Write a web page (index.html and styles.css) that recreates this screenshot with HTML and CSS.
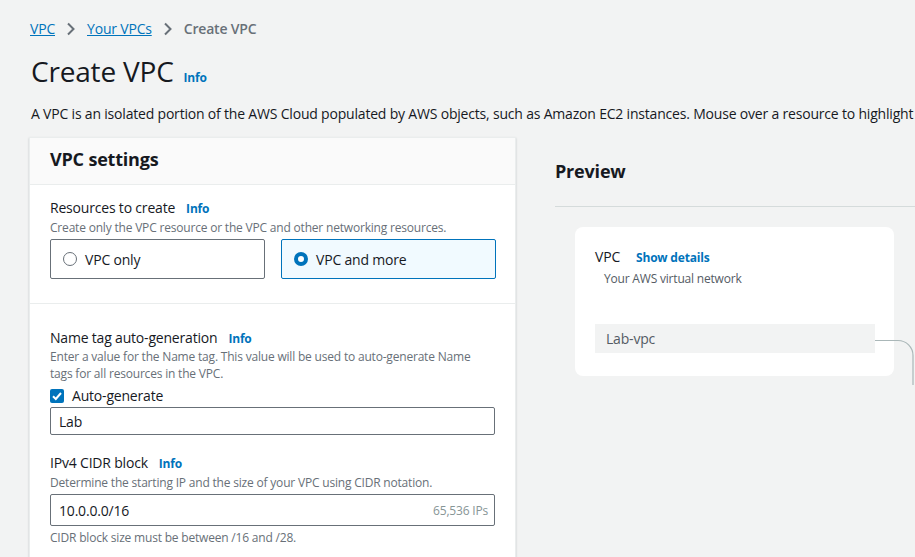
FILE: index.html
```html
<!DOCTYPE html>
<html lang="en">
<head>
<meta charset="utf-8">
<title>Create VPC</title>
<link rel="stylesheet" href="styles.css">
</head>
<body>
<div class="page">
  <nav class="crumbs">
    <a class="crumb-link" href="#">VPC</a>
    <svg class="chev" width="10" height="14" viewBox="0 0 10 14"><path d="M2 1.5 L7.5 7 L2 12.5" fill="none" stroke="#687078" stroke-width="2"/></svg>
    <a class="crumb-link" href="#">Your VPCs</a>
    <svg class="chev" width="10" height="14" viewBox="0 0 10 14"><path d="M2 1.5 L7.5 7 L2 12.5" fill="none" stroke="#687078" stroke-width="2"/></svg>
    <span class="crumb-current">Create VPC</span>
  </nav>
  <div class="title-row">
    <h1>Create VPC</h1>
    <a class="info" href="#">Info</a>
  </div>
  <p class="intro">A VPC is an isolated portion of the AWS Cloud populated by AWS objects, such as Amazon EC2 instances. Mouse over a resource to highlight</p>

  <div class="columns">
    <section class="panel">
      <header class="panel-head"><h2>VPC settings</h2></header>
      <div class="panel-section first">
        <div class="label-row"><span class="label">Resources to create</span><a class="info" href="#">Info</a></div>
        <div class="desc">Create only the VPC resource or the VPC and other networking resources.</div>
        <div class="tiles">
          <label class="tile"><span class="radio"></span><span>VPC only</span></label>
          <label class="tile selected"><span class="radio on"></span><span>VPC and more</span></label>
        </div>
      </div>
      <div class="panel-section second">
        <div class="label-row"><span class="label">Name tag auto-generation</span><a class="info" href="#">Info</a></div>
        <div class="desc wrap">Enter a value for the Name tag. This value will be used to auto-generate Name tags for all resources in the VPC.</div>
        <label class="check-row"><span class="checkbox"><svg width="14" height="14" viewBox="0 0 14 14"><path d="M3 7.2 L5.8 10 L11 4" fill="none" stroke="#fff" stroke-width="2"/></svg></span><span>Auto-generate</span></label>
        <div class="input small">Lab</div>

        <div class="label-row gap"><span class="label">IPv4 CIDR block</span><a class="info" href="#">Info</a></div>
        <div class="desc">Determine the starting IP and the size of your VPC using CIDR notation.</div>
        <div class="input big"><span>10.0.0.0/16</span><span class="ips">65,536 IPs</span></div>
        <div class="hint">CIDR block size must be between /16 and /28.</div>
      </div>
    </section>

    <section class="preview">
      <h2 class="preview-title">Preview</h2>
      <div class="rule"></div>
      <div class="card">
        <div class="card-head"><span class="card-name">VPC</span><a class="info" href="#">Show details</a></div>
        <div class="card-sub">Your AWS virtual network</div>
        <div class="node">Lab-vpc</div>
        <svg class="connector" width="40" height="60" viewBox="0 0 40 60"><path d="M0 15.5 H23 A15 15 0 0 1 38 30.5 V60" fill="none" stroke="#aab7b8" stroke-width="1.2"/></svg>
      </div>
    </section>
  </div>
</div>
</body>
</html>
```
FILE: styles.css
```css
* { box-sizing: border-box; }
html, body { margin: 0; padding: 0; }
body {
  background: #f2f3f3;
  font-family: "Open Sans", "Noto Sans", sans-serif;
  letter-spacing: -0.012em;
  color: #16191f;
  width: 915px;
  height: 557px;
  overflow: hidden;
}
.page { padding: 19px 0 0 29px; }
.crumbs {
  display: flex;
  align-items: center;
  gap: 11px;
  margin-left: 1px;
  font-size: 14px;
  line-height: 20px;
}
.crumb-link { color: #0073bb; text-decoration: underline; }
.chev { display: block; }
.crumb-current { color: #687078; font-weight: 600; }
.title-row {
  display: flex;
  align-items: baseline;
  gap: 10px;
  margin: 14px 0 0 2px;
}
h1 { margin: 0; font-size: 28px; line-height: 36px; font-weight: 400; }
.info { color: #0073bb; font-size: 12px; font-weight: 700; text-decoration: none; }
.intro {
  margin: 15px 0 0 2px;
  font-size: 14px;
  line-height: 20px;
  white-space: nowrap;
}
.columns { display: flex; margin-top: 13px; align-items: flex-start; }
.panel {
  width: 487px;
  flex: none;
  background: #fff;
  border: 1px solid #eaeded;
  border-bottom: none;
  box-shadow: 0 1px 2px rgba(0, 28, 36, 0.2);
  height: 440px;
}
.panel-head {
  background: #fafafa;
  border-bottom: 1px solid #eaeded;
  padding: 9px 20px 12px;
}
.panel-head h2 { margin: 0; font-size: 18px; line-height: 25px; font-weight: 700; }
.panel-section { padding: 0 20px; }
.panel-section.first { padding-top: 13px; padding-bottom: 24px; border-bottom: 1px solid #eaeded; }
.panel-section.second { padding-top: 24px; }
.label-row { display: flex; align-items: baseline; gap: 11px; font-size: 14px; line-height: 20px; }
.label-row.gap { margin-top: 18px; }
.desc { font-size: 12px; line-height: 17px; color: #687078; white-space: nowrap; }
.second .desc.wrap { white-space: normal; margin-top: -1px; }
.tiles { display: grid; grid-template-columns: 215px 215px; gap: 16px; margin-top: 3px; }
.tile {
  display: flex;
  align-items: center;
  gap: 8px;
  height: 40px;
  padding-left: 12px;
  border: 1px solid #687078;
  border-radius: 2px;
  font-size: 14px;
}
.tile.selected { background: #f1faff; border-color: #0073bb; }
.radio {
  width: 14px;
  height: 14px;
  border-radius: 50%;
  border: 1px solid #687078;
  background: #fff;
  flex: none;
}
.radio.on { border: 4px solid #0073bb; }
.check-row { display: flex; align-items: center; gap: 8px; font-size: 14px; line-height: 20px; margin-top: 4px; }
.checkbox {
  width: 14px;
  height: 14px;
  background: #0073bb;
  border-radius: 2px;
  display: flex;
}
.input {
  border: 1px solid #687078;
  border-radius: 2px;
  background: #fff;
  padding: 0 8px;
  font-size: 14px;
  display: flex;
  align-items: center;
  justify-content: space-between;
  margin-top: 1px;
}
.input.small { height: 28px; }
.input.big { height: 32px; margin-top: 3px; }
.ips { color: #879596; font-size: 12px; margin-right: -2px; }
.hint { font-size: 12px; line-height: 17px; color: #687078; margin-top: 3px; }
.preview { margin-left: 39px; width: 420px; padding-top: 22px; }
.preview-title { margin: 0; font-size: 18px; line-height: 24px; font-weight: 700; }
.rule { border-top: 1px solid #d5dbdb; margin-top: 23px; }
.card {
  position: relative;
  margin: 20px 0 0 20px;
  width: 319px;
  height: 149px;
  background: #fff;
  border-radius: 8px;
  padding: 20px 19px 0 20px;
}
.card-head { display: flex; align-items: baseline; gap: 16px; font-size: 14px; line-height: 20px; }
.card-name { color: #16191f; }
.card-sub { font-size: 12px; line-height: 16px; color: #545b64; margin: 3px 0 0 9px; }
.node {
  margin-top: 37px;
  height: 29px;
  background: #f2f3f3;
  color: #545b64;
  font-size: 14px;
  line-height: 29px;
  padding-left: 11px;
}
.connector { position: absolute; left: 300px; top: 98px; }
```
